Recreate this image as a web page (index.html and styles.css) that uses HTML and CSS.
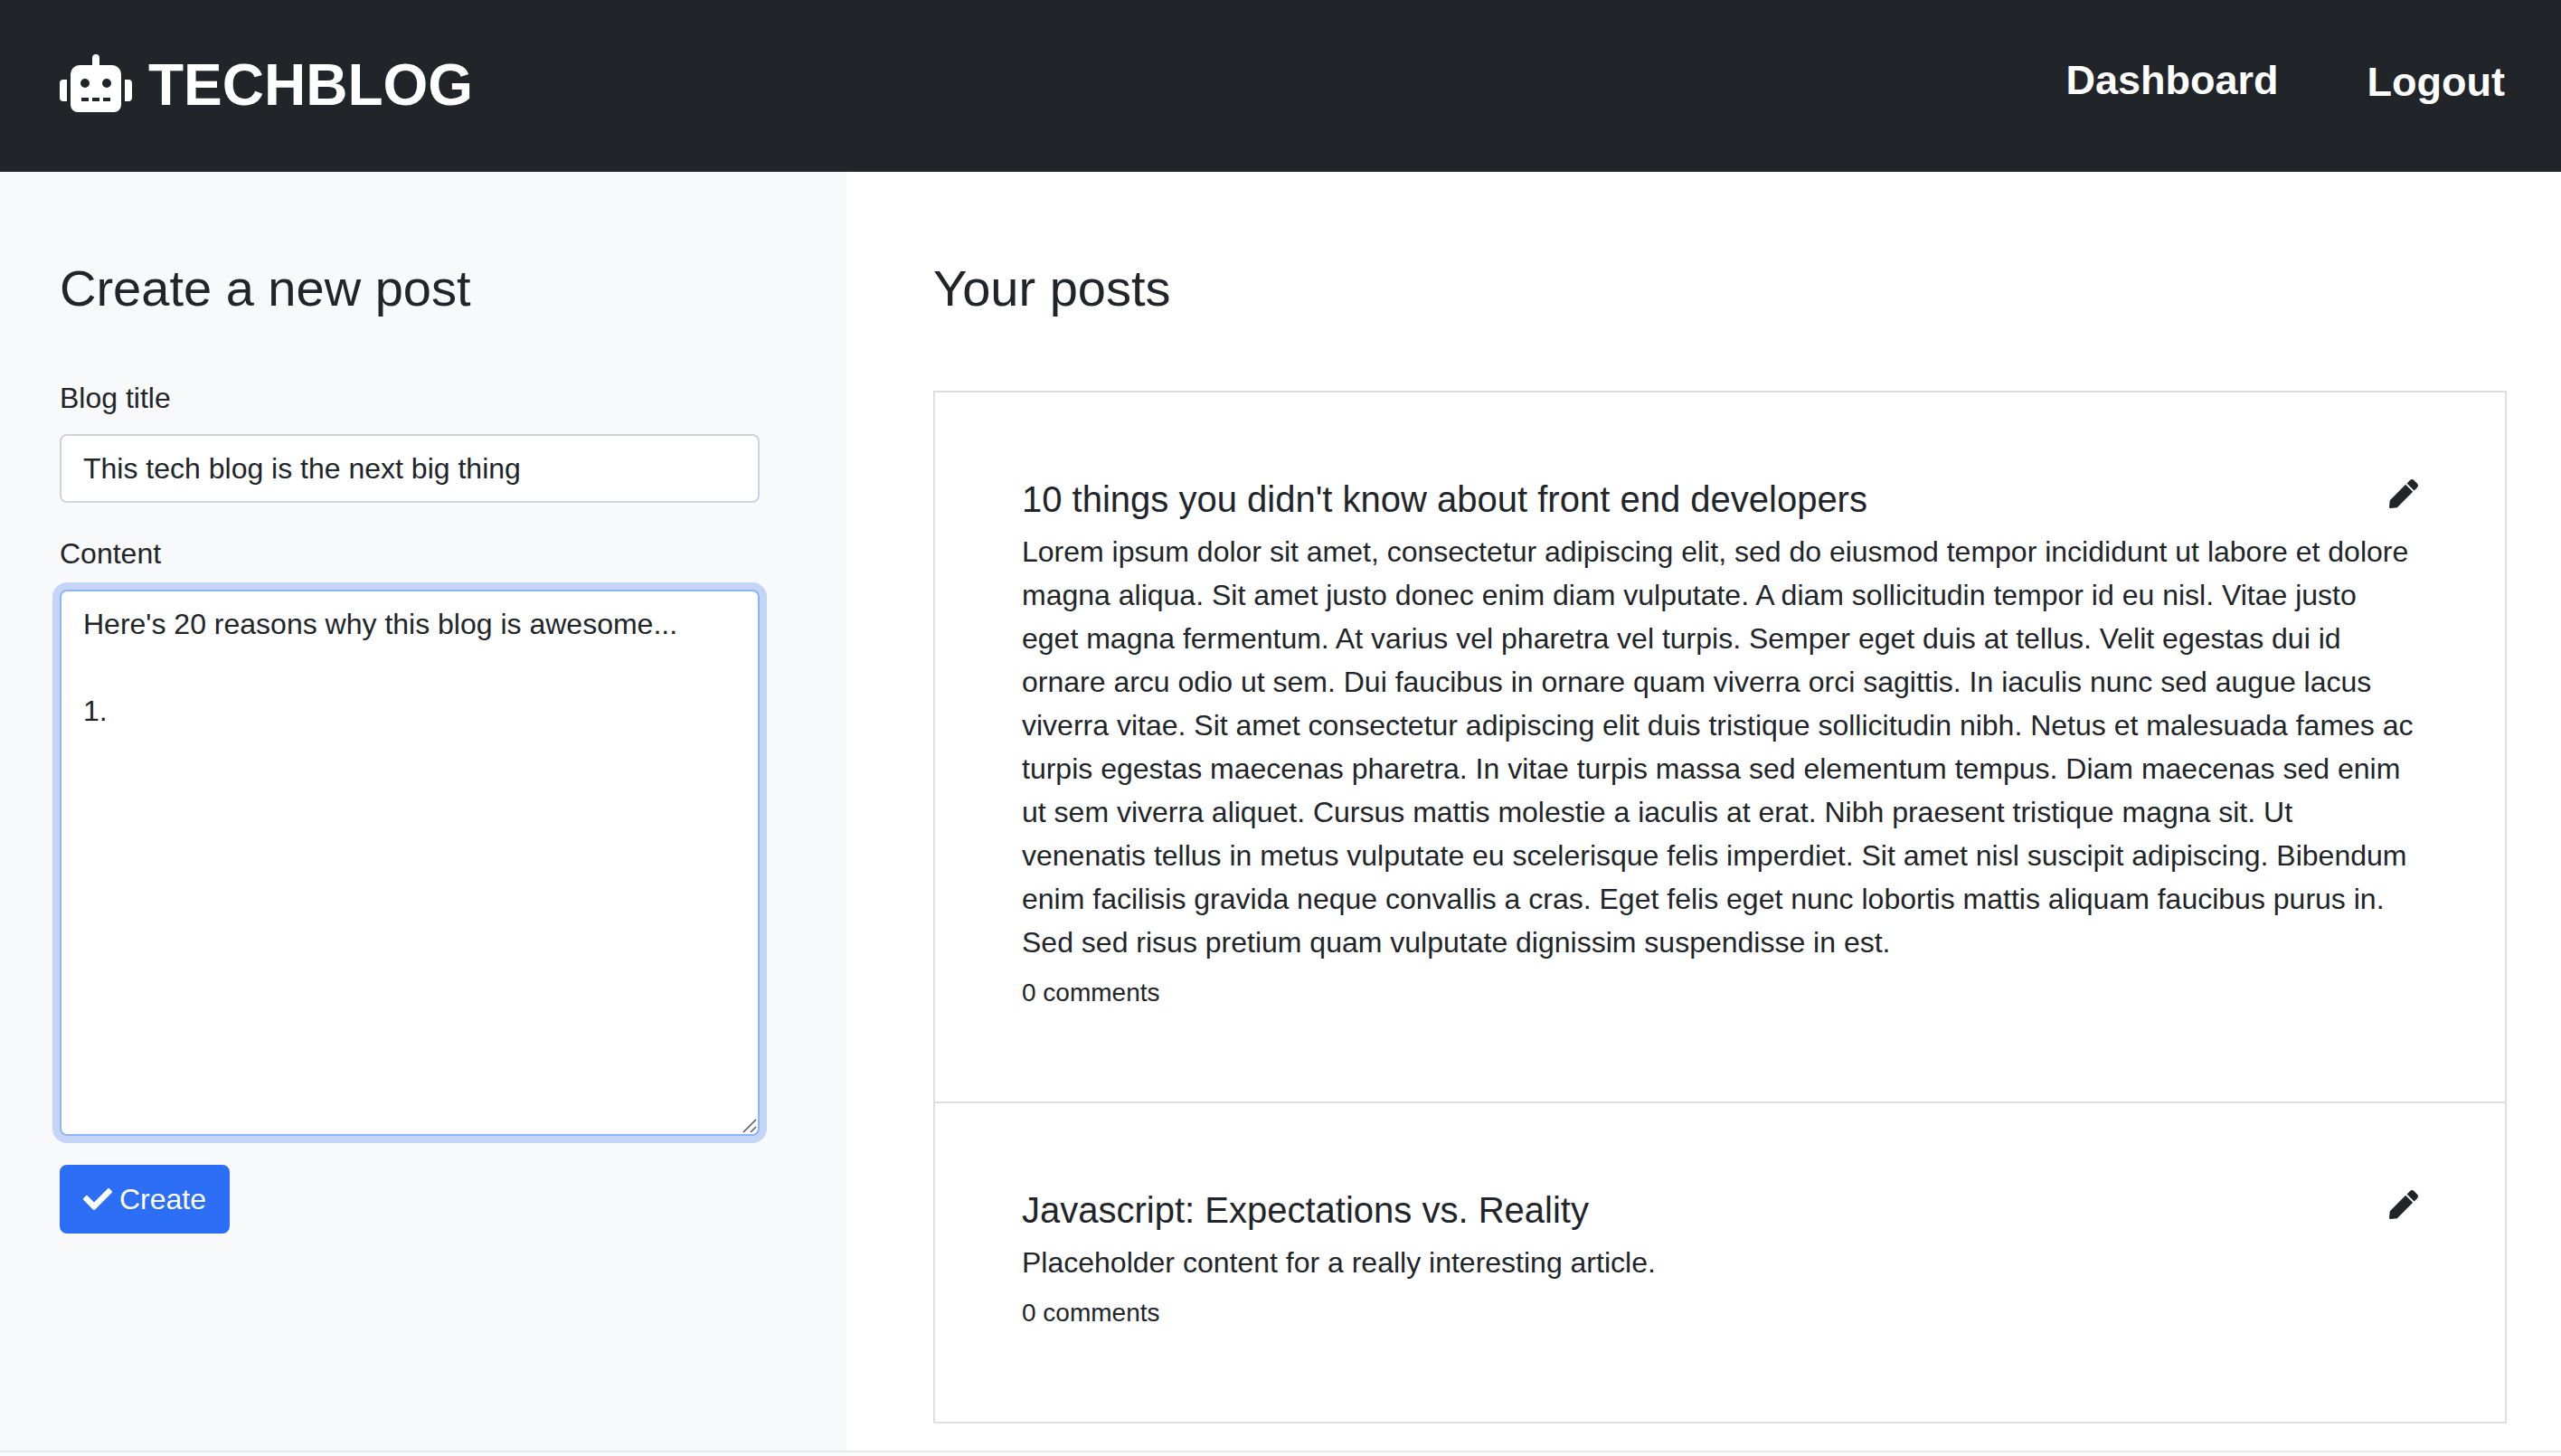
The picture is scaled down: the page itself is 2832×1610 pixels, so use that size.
FILE: index.html
```html
<!DOCTYPE html>
<html lang="en">
<head>
  <meta charset="utf-8">
  <meta name="viewport" content="width=device-width, initial-scale=1">
  <title>TECHBLOG</title>
  <link rel="stylesheet" href="styles.css">
</head>
<body>
  <header class="site-header">
    <a class="brand" href="#">
      <svg class="brand-icon" viewBox="0 0 640 512" aria-hidden="true"><path fill="currentColor" d="M32,224H64V416H32A31.96166,31.96166,0,0,1,0,384V256A31.96166,31.96166,0,0,1,32,224Zm512-48V448a64.06328,64.06328,0,0,1-64,64H160a64.06328,64.06328,0,0,1-64-64V176a79.974,79.974,0,0,1,80-80H288V32a32,32,0,0,1,64,0V96H464A79.974,79.974,0,0,1,544,176ZM264,256a40,40,0,1,0-40,40A39.997,39.997,0,0,0,264,256Zm-8,128H192v32h64Zm96,0H288v32h64ZM456,256a40,40,0,1,0-40,40A39.997,39.997,0,0,0,456,256Zm-8,128H384v32h64ZM640,256V384a31.96166,31.96166,0,0,1-32,32H576V224h32A31.96166,31.96166,0,0,1,640,256Z"/></svg>
      <span class="brand-name">TECHBLOG</span>
    </a>
    <nav class="site-nav">
      <a class="nav-item" href="#">Dashboard</a>
      <button class="nav-item nav-button" type="button">Logout</button>
    </nav>
  </header>

  <main class="layout">
    <section class="create-panel">
      <h1 class="section-title">Create a new post</h1>
      <form class="post-form">
        <div class="field">
          <label for="post-title">Blog title</label>
          <input class="control" id="post-title" type="text" value="This tech blog is the next big thing">
        </div>
        <div class="field">
          <label for="post-content">Content</label>
          <div class="textarea-wrap">
            <textarea class="control control-active" id="post-content" rows="12">Here's 20 reasons why this blog is awesome...

1.</textarea>
            <svg class="grip" viewBox="0 0 16 16" aria-hidden="true"><path d="M1 15 15 1M9 15l6-6" fill="none" stroke="#555" stroke-width="1.5"/></svg>
          </div>
        </div>
        <button class="btn" type="submit">
          <svg class="icon" viewBox="0 0 512 512" aria-hidden="true"><path fill="currentColor" d="M173.898 439.404l-166.4-166.4c-9.997-9.997-9.997-26.206 0-36.204l36.203-36.204c9.997-9.998 26.207-9.998 36.204 0L192 312.69 432.095 72.596c9.997-9.997 26.207-9.997 36.204 0l36.203 36.204c9.997 9.997 9.997 26.206 0 36.204l-294.4 294.401c-9.998 9.997-26.207 9.997-36.204-.001z"/></svg>
          <span>Create</span>
        </button>
      </form>
    </section>

    <section class="posts-panel">
      <h2 class="section-title">Your posts</h2>
      <div class="posts">
        <article class="post">
          <div class="post-head">
            <h3 class="post-title">10 things you didn't know about front end developers</h3>
            <a class="edit" href="#" aria-label="Edit post"><svg class="icon" viewBox="0 0 512 512" aria-hidden="true"><path fill="currentColor" d="M290.74 93.24l128.02 128.02-277.99 277.99-114.14 12.6C11.35 513.54-1.56 500.62.14 485.34l12.7-114.22 277.9-277.88zm207.2-19.06l-60.11-60.11c-18.75-18.75-49.16-18.75-67.91 0l-56.55 56.55 128.02 128.02 56.55-56.55c18.75-18.76 18.75-49.16 0-67.91z"/></svg></a>
          </div>
          <p class="post-body">Lorem ipsum dolor sit amet, consectetur adipiscing elit, sed do eiusmod tempor incididunt ut labore et dolore magna aliqua. Sit amet justo donec enim diam vulputate. A diam sollicitudin tempor id eu nisl. Vitae justo eget magna fermentum. At varius vel pharetra vel turpis. Semper eget duis at tellus. Velit egestas dui id ornare arcu odio ut sem. Dui faucibus in ornare quam viverra orci sagittis. In iaculis nunc sed augue lacus viverra vitae. Sit amet consectetur adipiscing elit duis tristique sollicitudin nibh. Netus et malesuada fames ac turpis egestas maecenas pharetra. In vitae turpis massa sed elementum tempus. Diam maecenas sed enim ut sem viverra aliquet. Cursus mattis molestie a iaculis at erat. Nibh praesent tristique magna sit. Ut venenatis tellus in metus vulputate eu scelerisque felis imperdiet. Sit amet nisl suscipit adipiscing. Bibendum enim facilisis gravida neque convallis a cras. Eget felis eget nunc lobortis mattis aliquam faucibus purus in. Sed sed risus pretium quam vulputate dignissim suspendisse in est.</p>
          <p class="post-meta">0 comments</p>
        </article>
        <article class="post">
          <div class="post-head">
            <h3 class="post-title">Javascript: Expectations vs. Reality</h3>
            <a class="edit" href="#" aria-label="Edit post"><svg class="icon" viewBox="0 0 512 512" aria-hidden="true"><path fill="currentColor" d="M290.74 93.24l128.02 128.02-277.99 277.99-114.14 12.6C11.35 513.54-1.56 500.62.14 485.34l12.7-114.22 277.9-277.88zm207.2-19.06l-60.11-60.11c-18.75-18.75-49.16-18.75-67.91 0l-56.55 56.55 128.02 128.02 56.55-56.55c18.75-18.76 18.75-49.16 0-67.91z"/></svg></a>
          </div>
          <p class="post-body">Placeholder content for a really interesting article.</p>
          <p class="post-meta">0 comments</p>
        </article>
      </div>
    </section>
  </main>

  <footer class="site-footer"></footer>
</body>
</html>
```

FILE: styles.css
```css
* {
  box-sizing: border-box;
}

body {
  margin: 0;
  min-height: 100vh;
  display: flex;
  flex-direction: column;
  background: #fff;
  color: #212529;
  font-family: "Liberation Sans", Arial, sans-serif;
  font-size: 32px;
  line-height: 48px;
}

h1, h2, h3, p {
  margin: 0;
  font-weight: 400;
}

a {
  color: inherit;
  text-decoration: none;
}

input, textarea, button {
  font: inherit;
  color: inherit;
}

.icon {
  display: block;
  width: 32px;
  height: 32px;
}

/* Header */
.site-header {
  display: flex;
  justify-content: space-between;
  align-items: flex-start;
  padding: 42px 62px 48px 66px;
  background: #212529;
  color: #fff;
  font-weight: 700;
}

.brand {
  display: flex;
  align-items: center;
  gap: 18px;
  font-size: 64px;
  line-height: 96px;
}

.brand-name {
  padding-top: 4px;
}

.brand-icon {
  width: 80px;
  height: 64px;
}

.site-nav {
  display: flex;
  align-items: flex-start;
  gap: 98px;
  padding-top: 14px;
}

.nav-item {
  font-size: 45px;
  line-height: 66px;
}

.nav-button {
  padding: 2px 0 0;
  border: 0;
  background: none;
  font-weight: 700;
}

/* Two-column layout */
.layout {
  display: grid;
  grid-template-columns: minmax(0, 1fr) minmax(0, 2fr);
  padding-right: 24px;
}

.create-panel {
  padding: 96px 96px 30px 66px;
  background: #f8f9fb;
}

.posts-panel {
  padding: 96px 36px 30px 96px;
}

.section-title {
  font-size: 56px;
  line-height: 66px;
}

/* Form */
.post-form {
  display: flex;
  flex-direction: column;
  align-items: flex-start;
  gap: 32px;
  margin-top: 64px;
}

.field {
  display: flex;
  flex-direction: column;
  gap: 16px;
  width: 100%;
}

.control {
  display: block;
  width: 100%;
  padding: 12px 24px;
  border: 2px solid #ced4da;
  border-radius: 8px;
  background: #fff;
  outline: 0;
}

input.control {
  height: 76px;
}

textarea.control {
  resize: none;
}

.control-active {
  border-color: #8cb5f9;
  box-shadow: 0 0 0 8px #c5d5f8;
}

.textarea-wrap {
  position: relative;
}

.grip {
  position: absolute;
  right: 3px;
  bottom: 3px;
  width: 16px;
  height: 16px;
}

.btn {
  display: flex;
  align-items: center;
  gap: 8px;
  padding: 12px 24px;
  border: 2px solid #2c6ef6;
  border-radius: 8px;
  background: #2c6ef6;
  color: #fff;
}

/* Posts */
.posts {
  margin-top: 80px;
  border: 2px solid #dedede;
}

.post {
  display: flex;
  flex-direction: column;
  gap: 8px;
  padding: 96px;
}

.post + .post {
  border-top: 2px solid #dedede;
}

.post-head {
  display: flex;
  justify-content: space-between;
  align-items: flex-start;
  min-height: 48px;
}

.post-title {
  font-size: 40px;
  line-height: 44px;
}

.post-meta {
  font-size: 28px;
}

.site-footer {
  flex: 1;
  border-top: 2px solid #e7e8e9;
  background: #fafafa;
}
```
